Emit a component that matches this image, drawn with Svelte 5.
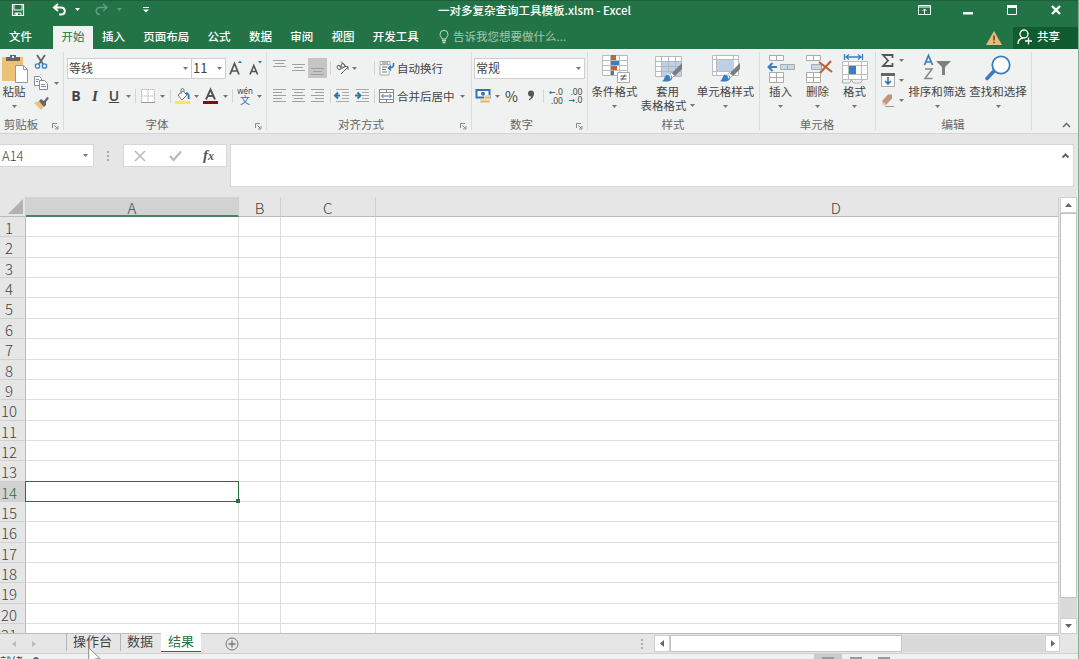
<script>
	const menuTabs = ['插入', '页面布局', '公式', '数据', '审阅', '视图', '开发工具'];
	const columns = ['A', 'B', 'C', 'D'];
	const rows = Array.from({ length: 21 }, (_, i) => i + 1);

	let activeCell = $state({ col: 'A', row: 14 });
	let activeSheet = $state('结果');

	function selectCell(col, row) {
		activeCell = { col, row };
	}
</script>

{#snippet caret()}
	<svg class="caret" width="5" height="3" viewBox="0 0 5 3"><path d="M0 0h5L2.5 3z" fill="currentColor" /></svg>
{/snippet}

{#snippet launcher()}
	<svg class="launcher" width="7" height="7" viewBox="0 0 7 7" fill="none" stroke="#888">
		<path d="M.5 5V.5H5M2.500 2.500l2.500 2.500M6 3v3H3" />
	</svg>
{/snippet}

{#snippet lines(widths, align, top)}
	<svg width="19" height="20" viewBox="0 0 19 20" fill="#a0a0a0">
		{#each widths as w, i}
			<rect x={align === 'left' ? 3 : align === 'right' ? 16 - w : (19 - w) / 2} y={top + i * 3} width={w} height="1" />
		{/each}
	</svg>
{/snippet}

{#snippet indent(right)}
	<svg width="19" height="20" viewBox="0 0 19 20">
		<path d="M3 3.500h13M9 6.500h7M9 9.500h7M9 12.500h7M3 15.500h13" stroke="#aaa" />
		{#if right}
			<path d="M2 9.500h4M4.500 6.500 7.500 9.500 4.500 12.500" fill="none" stroke="#2f75b5" stroke-width="2" />
		{:else}
			<path d="M3 9.500h4M5 6.500 2 9.500 5 12.500" fill="none" stroke="#2f75b5" stroke-width="2" />
		{/if}
	</svg>
{/snippet}

{#snippet brush()}
	<path d="M29 9v6l-7 7-3-3z" fill="#7d7d7d" />
	<path d="m18.500 18.500 3 3-2 2-3-3z" fill="#fff" stroke="#777" stroke-width=".6" />
	<path d="M9 27c3-1 2-6 6-7 3 0 5 3 4 5-2 3-7 3-10 2z" fill="#3b7dbd" />
	<path d="M14 20.500c3-1 4 2 3.500 4" fill="none" stroke="#d7e9f7" stroke-width="1.500" />
{/snippet}

<div class="app">
	<header class="titlebar">
		<div class="quick">
			<svg width="14" height="14" viewBox="0 0 14 14"><path d="M1.500 1.500h11v11h-11z" fill="none" stroke="#fff" stroke-width="1.200" /><path d="M3 2v5h8V2M4 12.500V10h6v2.500" fill="none" stroke="#fff" /><path d="M5 10h2v3H5z" fill="#fff" /></svg>
			<svg width="15" height="13" viewBox="0 0 15 13" fill="none" stroke="#fff" stroke-width="2"><path d="M6 1 2 4.500 6 8M2 4.500h7c5 0 5 7 0 7H7" /></svg>
			{@render caret()}
			<svg class="dim" width="14" height="13" viewBox="0 0 14 13" fill="none" stroke="#fff" stroke-width="1.400"><path d="m9 1 4 3.500L9 8M13 4.500H6c-5 0-5 7 0 7" /></svg>
			<span class="dim">{@render caret()}</span>
			<svg width="6" height="6" viewBox="0 0 6 6" fill="#fff"><path d="M0 0h6v1H0zM0 2.500h6L3 5.500z" /></svg>
		</div>
		<h1>一对多复杂查询工具模板.xlsm - Excel</h1>
		<div class="window">
			<svg width="13" height="10" viewBox="0 0 13 10" fill="none" stroke="#fff"><path d="M.5.500h12v9H.5zM0 2h13M6.500 9V4M4.500 6l2-2 2 2" /></svg>
			<svg width="10" height="10" viewBox="0 0 10 10"><path d="M0 7h10v2.500H0z" fill="#fff" /></svg>
			<svg width="10" height="10" viewBox="0 0 10 10"><path d="M.5.500h9v9h-9z" fill="none" stroke="#fff" /><path d="M0 0h10v3H0z" fill="#fff" /></svg>
			<svg width="10" height="10" viewBox="0 0 10 10"><path d="m1 1 8 8M9 1 1 9" stroke="#fff" stroke-width="2.400" /></svg>
		</div>
	</header>

	<nav class="menu">
		<span class="file">文件</span>
		<span class="current">开始</span>
		<div class="tabs">
			{#each menuTabs as tab}<span>{tab}</span>{/each}
		</div>
		<div class="tell">
			<svg width="10" height="13" viewBox="0 0 10 13" fill="none" stroke="#c3dacd"><path d="M3 9C3 7.500 1 6.500 1 4.300a4 4 0 0 1 8 0C9 6.500 7 7.500 7 9z" /><path d="M3 10.500h4M3.500 12.500h3" stroke-width="1.600" /></svg>
			<span>告诉我您想要做什么...</span>
		</div>
		<svg class="warn" width="16" height="14" viewBox="0 0 16 14"><path d="M8 0 16 14H0z" fill="#e6bd79" /><path d="M8 4.500V9.500M8 10.700v1.600" stroke="#5c4620" stroke-width="1.500" /></svg>
		<div class="share">
			<svg width="15" height="16" viewBox="0 0 15 16" fill="none" stroke="#fff" stroke-width="1.300"><circle cx="7" cy="5" r="4" /><path d="M1 15c0-3 2-5.500 5-6M11.500 8.500v7M8 12h7" /></svg>
			<span>共享</span>
		</div>
	</nav>

	<section class="ribbon">
		<div class="group">
			<div class="body clipboard">
				<div class="big paste">
					<svg width="28" height="30" viewBox="0 0 28 30"><path d="M2 3h21v24H2z" fill="#ecc277" /><path d="M6 3h4V1h6v2h4v4H6z" fill="#666" /><path d="M12 2h2v2h-2z" fill="#eee" /><path d="M15.500 11.500h8l4 4v13h-12z" fill="#fff" stroke="#999" /><path d="M23.500 11.500v4h4" fill="none" stroke="#999" /></svg>
					<span>粘贴</span>
					{@render caret()}
				</div>
				<div class="stack">
					<svg width="14" height="14" viewBox="0 0 14 14" fill="none"><path d="m3 0 6 9M11 0 5 9" stroke="#666" stroke-width="1.800" /><circle cx="3.500" cy="11" r="2.200" stroke="#3d7fb8" stroke-width="1.300" /><circle cx="10.500" cy="11" r="2.200" stroke="#3d7fb8" stroke-width="1.300" /></svg>
					<svg width="14" height="14" viewBox="0 0 14 14" fill="#fff" stroke="#888"><path d="M.5.500h5l2 2v7h-7z" /><path d="M5.500 4.500h5l3 3v6h-8z" /><path d="M2 3.500h3M2 5.500h2M7 8.500h4M7 10.500h5" stroke="#5b92c4" /></svg>
					<svg width="15" height="13" viewBox="0 0 15 13"><path d="m0 6 5-2 5 5-3 4z" fill="#ecc277" /><path d="m5 4 2-2 3 2 3-4 2 1-3 4v3l-2 2z" fill="#666" /></svg>
				</div>
				<div class="copycaret">{@render caret()}</div>
			</div>
			<footer>剪贴板{@render launcher()}</footer>
		</div>

		<div class="group">
			<div class="body font">
				<div class="row fontnames">
					<div class="select">等线{@render caret()}</div>
					<div class="select">11{@render caret()}</div>
					<svg width="16" height="18" viewBox="0 0 16 18"><path d="m1 15.500 4.500-11 4.500 11M3 12h5" fill="none" stroke="#555" stroke-width="1.700" /><path d="M9 4 11 1.500 13 4z" fill="#2f75b5" /></svg>
					<svg width="16" height="18" viewBox="0 0 16 18"><path d="m1 15.500 3.800-9 3.800 9M2.500 12.500h4.500" fill="none" stroke="#555" stroke-width="1.600" /><path d="M9 2h4l-2 2.500z" fill="#2f75b5" /></svg>
				</div>
				<div class="row fonttools">
					<b>B</b>
					<i>I</i>
					<u>U</u>
					{@render caret()}
					<span class="sep"></span>
					<svg width="14" height="14" viewBox="0 0 14 14" fill="#fff" stroke="#bbb"><path d="M.5.500h13v13H.5zM7 .5v13M.5 7h13" stroke-dasharray="1.500 .5" /><path d="M0 13.500h14" stroke="#999" /></svg>
					{@render caret()}
					<span class="sep"></span>
					<svg width="16" height="16" viewBox="0 0 16 16"><path d="m3 7 5-4 4 4-5 5z" fill="#fff" stroke="#777" /><path d="M6 6V2a1.500 1.500 0 0 1 3 0v2" fill="none" stroke="#777" /><path d="M11 5c3 0 3 3 2.500 6" fill="none" stroke="#2f75b5" stroke-width="1.800" /><path d="M0 13h15v3H0z" fill="#fcea4b" /></svg>
					{@render caret()}
					<svg width="16" height="16" viewBox="0 0 16 16"><path d="m3 11.500 4.500-10 4.500 10M5 8h5" fill="none" stroke="#555" stroke-width="1.900" /><path d="M0 13h15v3H0z" fill="#771410" /></svg>
					{@render caret()}
					<span class="sep"></span>
					<div class="pinyin"><small>wén</small><span>文</span></div>
					{@render caret()}
				</div>
			</div>
			<footer>字体{@render launcher()}</footer>
		</div>

		<div class="group">
			<div class="body align">
				<div class="row">
					{@render lines([13, 9, 13], 'center', 2)}
					{@render lines([13, 9, 13], 'center', 6)}
					<div class="pressed">{@render lines([13, 9, 13], 'center', 10)}</div>
					<span class="sep"></span>
					<svg width="16" height="16" viewBox="0 0 16 16" fill="none" stroke="#666"><path d="m6 14 7-7M9.500 6.500H13V10" /><ellipse cx="4" cy="7.500" rx="1.600" ry="2.200" transform="rotate(-45 4 7.500)" /><path d="m4 5 3.500 4M6 1.500l4.500 4.500" /><ellipse cx="8" cy="5.500" rx="1.600" ry="2" transform="rotate(-45 8 5.500)" /></svg>
					<span class="near">{@render caret()}</span>
					<span class="sep"></span>
					<svg width="16" height="16" viewBox="0 0 16 16" fill="none"><path d="M1 1.500h10v3H1zM1 5v10h9v-4" fill="#fff" stroke="#aaa" /><path d="M3 3h6M3 7h5M3 9.500h4M3 12h5" stroke="#777" /><path d="M14.500 3v2c0 2-1 3-5 3M12 5.500 9.500 8l2.500 2.500" stroke="#2f75b5" stroke-width="1.500" /></svg>
					<span class="text">自动换行</span>
				</div>
				<div class="row">
					{@render lines([13, 9, 13, 9, 13], 'left', 3)}
					{@render lines([13, 9, 13, 9, 13], 'center', 3)}
					{@render lines([13, 9, 13, 9, 13], 'right', 3)}
					<span class="sep"></span>
					{@render indent(false)}
					{@render indent(true)}
					<span class="sep"></span>
					<svg width="16" height="16" viewBox="0 0 16 16"><path d="M.5 1.500h14v13H.5zM.5 4.500h14M.5 11.500h14M7.500 1v3M7.500 12v3" fill="#fff" stroke="#888" /><path d="M3 8h9M4.500 6 2.500 8l2 2M10.500 6l2 2-2 2" fill="none" stroke="#2f75b5" /></svg>
					<span class="text">合并后居中</span>
					{@render caret()}
				</div>
			</div>
			<footer>对齐方式{@render launcher()}</footer>
		</div>

		<div class="group">
			<div class="body number">
				<div class="row"><div class="select">常规{@render caret()}</div></div>
				<div class="row numtools">
					<svg width="16" height="16" viewBox="0 0 16 16"><path d="M1.500 2h13v7.500h-13z" fill="#fff" stroke="#2f75b5" stroke-width="2" /><circle cx="8" cy="5.800" r="2" fill="#2f75b5" /><path d="M9 7h6v8H5v-4h4z" fill="#efd8ab" /><path d="M10 9.500h5M6 13.500h8" stroke="#dcae5d" /></svg>
					{@render caret()}
					<span class="percent">%</span>
					<svg width="8" height="12" viewBox="0 0 8 12"><path d="M1 3.500a3 3 0 0 1 6 0C7 7 5 9 2 10.500V9c1.500-.8 2-1.500 2-2.500-1.800 0-3-1.300-3-3z" fill="#555" /></svg>
					<span class="sep"></span>
					<div class="decimal"><span><em>←</em>.0</span><span>.00</span></div>
					<div class="decimal"><span>.00</span><span><em>→</em>.0</span></div>
				</div>
			</div>
			<footer>数字{@render launcher()}</footer>
		</div>

		<div class="group">
			<div class="body styles">
				<div class="big">
					<svg width="30" height="30" viewBox="0 0 30 30"><path d="M2.500 1.500h25v20h-25zM2.500 6.500h25M2.500 11.500h25M2.500 16.500h25M10.500 1v21M19.500 1v21" fill="#fff" stroke="#bbb" /><path d="M11 1h5v5h-5zM11 12h6v4h-6z" fill="#b9643a" /><path d="M11 7h8v4h-8zM11 17h3v4h-3z" fill="#3b7dbd" /><path d="M17.500 18.500h12v10h-12z" fill="#fff" stroke="#aaa" /><path d="M20.500 22h6M20.500 25h6M25 20.500l-3.500 6" stroke="#555" /></svg>
					<span>条件格式</span>
					{@render caret()}
				</div>
				<div class="big two">
					<svg width="30" height="30" viewBox="0 0 30 30"><path d="M2.500 2.500h26v20h-26z" fill="#fff" stroke="#bbb" /><path d="M8 8h20v14H8z" fill="#bdd0e6" /><path d="M2.500 7.500h26M2.500 12.500h26M2.500 17.500h26M8.500 2v21M15.500 2v21M22.500 2v21" stroke="#b2b8bf" />{@render brush()}</svg>
					<span>套用</span>
					<span class="second">表格格式{@render caret()}</span>
				</div>
				<div class="big">
					<svg width="30" height="30" viewBox="0 0 30 30"><path d="M1.500 1.500h26v20h-26zM1.500 5.500h26M1.500 17.500h26M5.500 1v21M22.500 1v21" fill="#fff" stroke="#bbb" /><path d="M6 6h17v11H6z" fill="#bdd0e6" />{@render brush()}</svg>
					<span>单元格样式</span>
					{@render caret()}
				</div>
			</div>
			<footer>样式</footer>
		</div>

		<div class="group">
			<div class="body cells">
				<div class="big">
					<svg width="28" height="30" viewBox="0 0 28 30"><path d="M2.500 1.500h14v5h-14zM9.500 1v6M2.500 18.500h14v10h-14zM2.500 23.500h14M9.500 18v11" fill="#fff" stroke="#aaa" /><path d="M13.500 10.500h14v5h-14zM20.500 10v6" fill="#c7d7ea" stroke="#aaa" /><path d="M10 13H1.500M5.500 9l-4 4 4 4" fill="none" stroke="#3b7dbd" stroke-width="1.900" /></svg>
					<span>插入</span>
					{@render caret()}
				</div>
				<div class="big">
					<svg width="28" height="30" viewBox="0 0 28 30"><path d="M2.500 1.500h14v5h-14zM9.500 1v6M2.500 18.500h14v10h-14zM2.500 23.500h14M9.500 18v11" fill="#fff" stroke="#aaa" /><path d="M7.500 10.500h10v5h-10z" fill="#c7d7ea" stroke="#aaa" /><path d="m15 8 13 10M27 7 16 19" stroke="#b9643a" stroke-width="2.200" /></svg>
					<span>删除</span>
					{@render caret()}
				</div>
				<div class="big">
					<svg width="28" height="30" viewBox="0 0 28 30"><path d="M1.500 7.500h25v18h-25zM1.500 11.500h25M1.500 20.500h25M7.500 7v19M20.500 7v19" fill="#fff" stroke="#bbb" /><path d="M1.500 26v3h7l2-3 2 3h7l2-3" fill="none" stroke="#aaa" /><path d="M8 12h7v8H8z" fill="#3b7dbd" /><path d="M3.500 0v6M21.500 0v6M5 3h15M8 .5 5 3l3 2.500M17 .5 20 3l-3 2.500" fill="none" stroke="#3b7dbd" stroke-width="1.300" /></svg>
					<span>格式</span>
					{@render caret()}
				</div>
			</div>
			<footer>单元格</footer>
		</div>

		<div class="group">
			<div class="body edit">
				<div class="editstack">
					<div>
						<svg width="14" height="13" viewBox="0 0 14 13"><path d="M11.500 4V1H2l5 5.500L2 12h9.500V9" fill="none" stroke="#555" stroke-width="1.800" /></svg>
						{@render caret()}
					</div>
					<div>
						<svg width="14" height="14" viewBox="0 0 14 14"><path d="M.5.500h13v13H.5z" fill="#fff" stroke="#aaa" /><path d="M0 0h14v3H0z" fill="#666" /><path d="M7 4v7M4 8l3 3 3-3" fill="none" stroke="#2f75b5" stroke-width="1.700" /></svg>
						{@render caret()}
					</div>
					<div>
						<svg width="14" height="13" viewBox="0 0 14 13"><path d="m1 7 6-6.500h4v4L5 11H3z" fill="#c4957c" /><path d="m1 7 4 3-1 2-3-2z" fill="#e8c9b8" /><path d="M4 12.500h9" stroke="#999" /></svg>
						{@render caret()}
					</div>
				</div>
				<div class="big">
					<svg width="28" height="30" viewBox="0 0 28 30" fill="none"><path d="m1.500 11 4-9.500 4 9.500M3 8h5" stroke="#3b7dbd" stroke-width="1.700" /><path d="M2 15h7L2 24.500h7.500" stroke="#888" stroke-width="1.500" /><path d="M13 7h15l-6 6v8h-3v-8z" fill="#7f7f7f" /></svg>
					<span>排序和筛选</span>
					{@render caret()}
				</div>
				<div class="big">
					<svg width="28" height="30" viewBox="0 0 28 30"><path d="m10 17-7 7.500" stroke="#3b7dbd" stroke-width="3.600" stroke-linecap="round" /><circle cx="17" cy="11" r="8.700" fill="#fff" stroke="#3b7dbd" stroke-width="1.800" /></svg>
					<span>查找和选择</span>
					{@render caret()}
				</div>
			</div>
			<footer>编辑</footer>
		</div>
		<div class="collapse">
			<svg width="9" height="6" viewBox="0 0 9 6"><path d="m1 5 3.500-3.500L8 5" fill="none" stroke="#666" stroke-width="1.500" /></svg>
		</div>
	</section>

	<section class="formula">
		<div class="namebox">{activeCell.col}{activeCell.row}{@render caret()}</div>
		<span class="dots"></span>
		<div class="fx">
			<svg width="12" height="12" viewBox="0 0 12 12"><path d="m1 1 10 10M11 1 1 11" stroke="#bbb" stroke-width="1.600" /></svg>
			<svg width="13" height="12" viewBox="0 0 13 12"><path d="m1 6 3.500 4L12 1.500" fill="none" stroke="#bbb" stroke-width="2.200" /></svg>
			<i>f<small>x</small></i>
		</div>
		<div class="input">
			<svg width="7" height="5" viewBox="0 0 7 5"><path d="m.5 4.500 3-3 3 3" fill="none" stroke="#666" stroke-width="2" /></svg>
		</div>
	</section>

	<main>
		<div class="sheet">
			<div class="line head">
				<div class="corner"><svg width="15" height="15" viewBox="0 0 15 15"><path d="M15 0v15H0z" fill="#b1b1b1" /></svg></div>
				{#each columns as col}
					<div class="colhead {col}" class:on={activeCell.col === col}>{col}</div>
				{/each}
			</div>
			{#each rows as row}
				<div class="line">
					<div class="rowhead" class:on={activeCell.row === row}>{row}</div>
					{#each columns as col}
						<!-- svelte-ignore a11y_click_events_have_key_events, a11y_no_static_element_interactions -->
						<div
							class="cell"
							class:selected={activeCell.col === col && activeCell.row === row}
							onclick={() => selectCell(col, row)}
						></div>
					{/each}
				</div>
			{/each}
		</div>
		<div class="vscroll">
			<span class="btn"><svg width="7" height="4" viewBox="0 0 7 4"><path d="M0 4h7L3.500 0z" fill="#666" /></svg></span>
			<span class="thumb"></span>
			<span class="track"></span>
			<span class="btn"><svg width="7" height="4" viewBox="0 0 7 4"><path d="M0 0h7L3.500 4z" fill="#666" /></svg></span>
		</div>
	</main>

	<div class="sheetbar">
		<div class="arrows">
			<svg width="4" height="6" viewBox="0 0 4 6"><path d="M4 0v6L0 3z" fill="#bbb" /></svg>
			<svg width="4" height="6" viewBox="0 0 4 6"><path d="M0 0v6l4-3z" fill="#bbb" /></svg>
		</div>
		{#each ['操作台', '数据', '结果'] as name}
			<button class:active={activeSheet === name} onclick={() => (activeSheet = name)}>{name}</button>
		{/each}
		<svg class="add" width="14" height="14" viewBox="0 0 14 14" fill="none" stroke="#777"><circle cx="7" cy="7" r="6" /><path d="M7 3.500v7M3.500 7h7" stroke-width="1.300" /></svg>
		<span class="dots"></span>
		<div class="hscroll">
			<span class="btn"><svg width="4" height="7" viewBox="0 0 4 7"><path d="M4 0v7L0 3.500z" fill="#666" /></svg></span>
			<span class="thumb"></span>
			<span class="track"></span>
			<span class="btn"><svg width="4" height="7" viewBox="0 0 4 7"><path d="M0 0v7l4-3.500z" fill="#666" /></svg></span>
		</div>
	</div>

	<div class="status">
		<span>就绪</span>
		<svg width="8" height="8" viewBox="0 0 8 8"><circle cx="4" cy="4" r="3" fill="#666" /></svg>
		<div class="views"><span class="on"></span><span></span><span></span></div>
	</div>

	<svg class="pointer" width="13" height="18" viewBox="0 0 13 18"><path d="M.7.800v15l3.500-3.500 2 5h3l-2-5.500h5z" fill="#fff" stroke="#888" /></svg>
</div>

<style>
	:global(body) {
		overflow: hidden;
	}

	.app {
		position: relative;
		width: 1079px;
		height: 659px;
		overflow: hidden;
		box-sizing: border-box;
		border-right: 1px solid #8aab98;
		background: #e6e6e6;
		color: #444;
		font: 11.5px/14px 'Noto Sans CJK SC', sans-serif;
		white-space: nowrap;
		display: flex;
		flex-direction: column;
	}

	.app * {
		box-sizing: border-box;
	}

	svg {
		display: block;
		flex: none;
		overflow: visible;
	}

	/* title */
	.titlebar {
		height: 26px;
		flex: none;
		display: grid;
		grid-template-columns: 438px 480px 1fr;
		background: #227447;
		border-top: 1px solid #1c5f3a;
		color: #fff;
	}

	.quick {
		display: grid;
		grid-template-columns: 41px 23px 19px 23px 26px 1fr;
		align-items: center;
		padding: 0 0 8px 11px;
	}

	.titlebar .caret {
		color: #fff;
		justify-self: start;
	}

	.dim {
		opacity: 0.3;
	}

	h1 {
		margin: 0;
		padding-top: 1px;
		font: 500 11.5px/16px 'Noto Sans CJK SC', sans-serif;
	}

	.window {
		display: grid;
		grid-template-columns: 45px 44px 44px 1fr;
		align-items: center;
		padding-bottom: 8px;
	}

	.menu {
		height: 23px;
		flex: none;
		display: flex;
		align-items: center;
		background: #227447;
		color: #fff;
		font-weight: 500;
	}

	.menu > *,
	.menu .tabs span {
		line-height: 13px;
	}

	.file {
		width: 53px;
		padding-left: 9px;
	}

	.menu .current {
		width: 40px;
		height: 23px;
		line-height: 21px;
		text-align: center;
		background: #f0f2f1;
		color: #227447;
		font-weight: 400;
	}

	.tabs {
		width: 346px;
		padding: 0 0 2px 9px;
		display: flex;
		gap: 18.3px;
	}

	.file,
	.tell,
	.share {
		padding-bottom: 2px;
	}

	.tell {
		width: 547px;
		display: flex;
		align-items: center;
		gap: 4px;
		color: #a3c6b2;
		font-weight: 400;
	}

	.warn {
		margin-right: 11px;
	}

	.share {
		flex: 1;
		height: 22px;
		display: flex;
		align-items: center;
		gap: 5px;
		padding-left: 4px;
		background: #105c30;
	}

	/* ribbon */
	.ribbon {
		height: 85px;
		flex: none;
		display: grid;
		grid-template-columns: 64px 203px 205px 116px 172px 116px 156px 1fr;
		background: #f0f2f1;
		border-bottom: 1px solid #d4d4d4;
	}

	.group {
		display: grid;
		grid-template-rows: 66px 18px;
		background: linear-gradient(#dcdcdc, #dcdcdc) right 3px / 1px 78px no-repeat;
		background-position: right 3px;
	}

	.body {
		padding-top: 5px;
	}

	footer {
		display: flex;
		align-items: center;
		justify-content: center;
		color: #666;
		padding-right: 17px;
		line-height: 18px;
		position: relative;
	}

	.group:first-child footer {
		padding-right: 22px;
	}

	.group:nth-child(n + 5) footer {
		padding-right: 2px;
	}

	.launcher {
		position: absolute;
		right: 5px;
		top: 8px;
	}

	.caret {
		color: #777;
		justify-self: center;
	}

	.row {
		height: 28px;
		display: grid;
		align-items: center;
		justify-items: center;
	}

	.sep {
		width: 1px;
		height: 14px;
		background: #d5d5d5;
	}

	.select {
		width: 100%;
		height: 21px;
		display: flex;
		align-items: center;
		justify-content: space-between;
		padding: 0 3px 0 1px;
		background: #fff;
		border: 1px solid #cfcfcf;
		font-size: 12px;
	}

	.big {
		display: flex;
		flex-direction: column;
		align-items: center;
	}

	.big > span {
		line-height: 15px;
	}

	.big > :global(.caret) {
		margin-top: 6px;
	}

	.big .second {
		margin-top: -1px;
		display: flex;
		align-items: center;
		gap: 3px;
	}

	.clipboard {
		display: grid;
		grid-template-columns: 28px 26px 5px;
	}

	.stack {
		display: flex;
		flex-direction: column;
		align-items: center;
		gap: 7px;
		padding-top: 1px;
	}

	.copycaret {
		padding-top: 28px;
	}

	.font {
		padding-left: 3px;
	}

	.fontnames {
		grid-template-columns: 125px 34px 22px 17px;
	}

	.fontnames .select + .select {
		width: 35px;
		margin-left: -1px;
		font-size: 13px;
	}

	.fonttools {
		grid-template-columns: 18px 20px 18px 10px 5px 20px 9px 7px 18px 9px 20px 9px 5px 20px 9px;
	}

	.fonttools b,
	.fonttools i,
	.fonttools u {
		font: bold 14px/16px 'Open Sans', sans-serif;
	}

	.fonttools i {
		font: italic bold 15px/16px 'Liberation Serif', serif;
	}

	.fonttools u {
		font-weight: 600;
	}

	.pinyin {
		display: flex;
		flex-direction: column;
		align-items: center;
	}

	.pinyin small {
		font: 8px/7px 'Noto Sans', sans-serif;
	}

	.pinyin span {
		color: #2f75b5;
		font-size: 10px;
		line-height: 11px;
	}

	.align {
		padding-left: 3px;
	}

	.align .row {
		grid-template-columns: 19px 19px 19px 6px 19px 20px 5px 20px 60px 11px;
	}

	.pressed {
		background: #c5c5c5;
	}

	.near {
		justify-self: start;
	}

	.text {
		justify-self: start;
	}

	.number {
		padding-left: 2px;
		padding-right: 3px;
	}

	.numtools {
		grid-template-columns: 18px 10px 19px 19px 6px 20px 19px;
	}

	.percent {
		font-size: 14px;
	}

	.decimal {
		display: flex;
		flex-direction: column;
		align-items: flex-end;
		font: 8.5px/8px 'Noto Sans', sans-serif;
	}

	.decimal em {
		color: #2f75b5;
		font: bold 8px/8px 'DejaVu Sans', sans-serif;
	}

	.styles {
		display: grid;
		grid-template-columns: 53px 53px 63px;
	}

	.cells {
		display: grid;
		grid-template-columns: 37px 37px 37px;
		padding-left: 2px;
	}

	.edit {
		display: grid;
		grid-template-columns: 30px 62px 60px;
	}

	.editstack {
		margin-top: -4px;
	}

	.editstack div {
		height: 20px;
		display: flex;
		align-items: center;
		gap: 4px;
		padding-left: 5px;
	}

	.collapse {
		display: flex;
		align-items: flex-end;
		justify-content: flex-end;
		padding: 0 7px 5px 0;
	}

	/* formula bar */
	.formula {
		height: 63px;
		flex: none;
		display: grid;
		grid-template-columns: 94px 29px 104px 3px 844px;
		align-items: start;
		padding-top: 10px;
	}

	.namebox,
	.fx,
	.input {
		height: 23px;
		background: #fff;
		border: 1px solid #d6d6d6;
		display: flex;
		align-items: center;
	}

	.namebox {
		border-left: 0;
		justify-content: space-between;
		padding: 0 5px 0 2px;
		font-size: 13px;
		font-weight: 300;
	}

	.dots {
		width: 2px;
		height: 10px;
		align-self: center;
		background: repeating-linear-gradient(#aaa 0 2px, transparent 2px 4px);
	}

	.formula .dots {
		align-self: start;
		margin: 7px 0 0 13px;
	}

	.fx {
		padding-left: 10px;
		gap: 23px;
	}

	.fx i {
		margin-left: -2px;
		font: italic bold 15px/18px 'Liberation Serif', serif;
		color: #555;
	}

	.fx small {
		font-size: 12px;
	}

	.input {
		grid-column: 5;
		height: 43px;
		align-items: flex-start;
		justify-content: flex-end;
		padding: 8px 4px;
	}

	/* grid */
	main {
		height: 437px;
		flex: none;
		display: grid;
		grid-template-columns: 1060px 17px;
	}

	.sheet {
		width: 1059px;
		height: 437px;
		overflow: hidden;
		border-bottom: 1px solid #bdbdbd;
		border-right: 1px solid #cfcfcf;
	}

	.line {
		height: 20.37px;
		display: grid;
		grid-template-columns: 26px 213px 42px 94.500px 1fr;
		grid-template-rows: 20.37px;
	}

	.line.head {
		height: 20px;
		grid-template-rows: 20px;
	}

	.corner {
		display: flex;
		justify-content: flex-end;
		align-items: flex-end;
		padding: 0 2px 2px 0;
		border-bottom: 1px solid #bbb;
		border-right: 1px solid #cfcfcf;
	}

	.colhead {
		border-bottom: 1px solid #bbb;
		border-right: 1px solid #cfcfcf;
		font-size: 15px;
		font-weight: 300;
		line-height: 22px;
		text-align: center;
	}

	.colhead.D {
		padding-left: 238px;
		border-right: 0;
	}

	.colhead.on {
		background: #d2d2d2;
		border-bottom: 2px solid #4d8162;
	}

	.rowhead {
		border-right: 1px solid #bbb;
		border-bottom: 1px solid #d0d0d0;
		font-size: 15px;
		font-weight: 300;
		line-height: 22px;
		padding-right: 7px;
		display: flex;
		justify-content: center;
	}

	.rowhead.on {
		background: #d2d2d2;
		color: #227447;
		border-right-color: #227447;
	}

	.cell {
		background: #fff;
		border-right: 1px solid #dedede;
		border-bottom: 1px solid #dedede;
	}

	.cell:last-child {
		border-right: 0;
	}

	.cell.selected {
		position: relative;
		border-color: #227447;
		outline: 1px solid #227447;
		outline-offset: -1px;
		margin: -1px 0 0 -1px;
	}

	.cell.selected::after {
		content: '';
		position: absolute;
		right: -2px;
		bottom: -2px;
		width: 4px;
		height: 4px;
		background: #227447;
	}

	.vscroll {
		display: grid;
		grid-template-rows: 16px 385px 20px 16px;
	}

	.btn {
		display: grid;
		place-items: center;
		background: #fff;
		border: 1px solid #cfcfcf;
	}

	.thumb {
		background: #fff;
		border: 1px solid #c4c4c4;
	}

	.track {
		background: #dadada;
	}

	/* sheet tabs */
	.sheetbar {
		height: 20px;
		flex: none;
		display: grid;
		grid-template-columns: 66px 54px 41px 40px 439px 14px 406px;
		border-bottom: 1px solid #d0d0d0;
	}

	.arrows {
		display: flex;
		gap: 16px;
		padding: 7px 0 0 12px;
	}

	.sheetbar button {
		border: 0;
		border-left: 1px solid #b5b5b5;
		background: none;
		color: #444;
		height: 17px;
		padding: 0 2px 3px 0;
		font: 13px/14px 'Noto Sans CJK SC', sans-serif;
	}

	.sheetbar button.active {
		height: 19px;
		margin-top: -1px;
		padding-right: 0;
		background: #fff;
		color: #227447;
		border-left: 0;
		border-bottom: 1px solid #227447;
	}

	.add {
		margin: 3px 0 0 24px;
	}

	.sheetbar .dots {
		margin-left: 1px;
	}

	.hscroll {
		display: grid;
		grid-template-columns: 16px 232px 143px 15px;
		height: 17px;
		margin-top: 1px;
	}

	.status {
		flex: 1;
		display: flex;
		height: 5px;
		overflow: hidden;
		background: #f0f2f1;
	}

	.status > span {
		width: 32px;
	}

	.status > svg {
		margin-top: 2px;
	}

	.views {
		display: flex;
		margin-left: 774px;
	}

	.views span {
		width: 28px;
		height: 5px;
		background: linear-gradient(#999, #999) center 3px / 12px 2px no-repeat;
	}

	.views .on {
		background-color: #cbcbcb;
	}

	.pointer {
		position: absolute;
		left: 88px;
		top: 647px;
	}
</style>
